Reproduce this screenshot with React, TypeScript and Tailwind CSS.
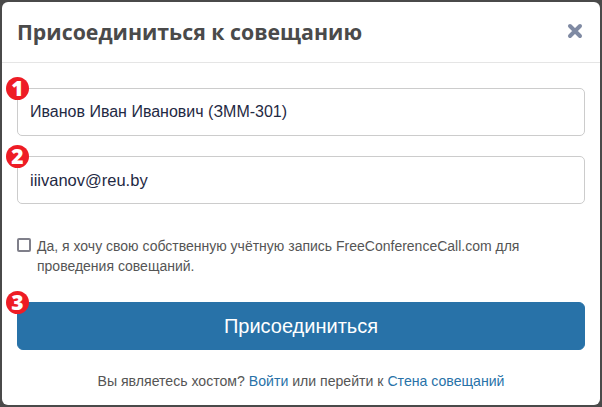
import React from "react";

const Badge = ({ n }: { n: number }) => (
  <span className="absolute left-[-12px] top-[-12px] z-10 flex h-[23px] w-[23px] items-center justify-center rounded-full bg-[#ee1c25] font-['Open_Sans',sans-serif] text-[21px] font-extrabold leading-none text-white">
    {n}
  </span>
);

const App = () => {
  return (
    <div className="h-[407px] w-[602px] overflow-hidden bg-[#4a4a4a] px-[2px] pt-[2px] font-['Liberation_Sans',sans-serif]">
      <div className="h-[403px] w-[598px] rounded-[6px] bg-white">
        <div className="flex h-[61px] items-center justify-between border-b border-[#e5e5e5] pl-[15px] pr-[17px]">
          <h1 className="font-['Open_Sans',sans-serif] text-[21.3px] font-bold leading-none text-[#4a4a4a]">
            Присоединиться к совещанию
          </h1>
          <svg width="16" height="16" viewBox="0 0 16 16" className="mt-[-3px] text-[#7f8aa3]">
            <path d="M3 3 13 13M13 3 3 13" stroke="currentColor" strokeWidth="4" strokeLinecap="round" />
          </svg>
        </div>
        <div className="flex flex-col px-[15px] pt-[25px]">
          <div className="relative flex h-[48px] items-center rounded-[5px] border border-[#cccccc] px-[12px] text-[16px] text-[#1f2a44]">
            <Badge n={1} />
            Иванов Иван Иванович (ЗММ-301)
          </div>
          <div className="relative mt-[20px] flex h-[48px] items-center rounded-[5px] border border-[#cccccc] px-[12px] text-[16.5px] text-[#1f2a44]">
            <Badge n={2} />
            iiivanov@reu.by
          </div>
          <div className="mt-[32px] flex items-start gap-[6px]">
            <span className="mt-[2px] h-[14px] w-[14px] shrink-0 rounded-[2px] border-2 border-[#7f7f8a] bg-white" />
            <p className="text-[14px] leading-[20px] text-[#555555]">
              Да, я хочу свою собственную учётную запись FreeConferenceCall.com для
              <br />
              проведения совещаний.
            </p>
          </div>
          <button className="relative mt-[26px] h-[48px] rounded-[6px] border border-[#2872a8] bg-[#2872a8] text-[20px] text-white">
            <Badge n={3} />
            Присоединиться
          </button>
          <p className="mt-[21px] text-center text-[14.1px] leading-[20px] text-[#555555]">
            Вы являетесь хостом? <a className="text-[#2872a8]">Войти</a> или перейти к{" "}
            <a className="text-[#2872a8]">Стена совещаний</a>
          </p>
        </div>
      </div>
    </div>
  );
};

export default App;
